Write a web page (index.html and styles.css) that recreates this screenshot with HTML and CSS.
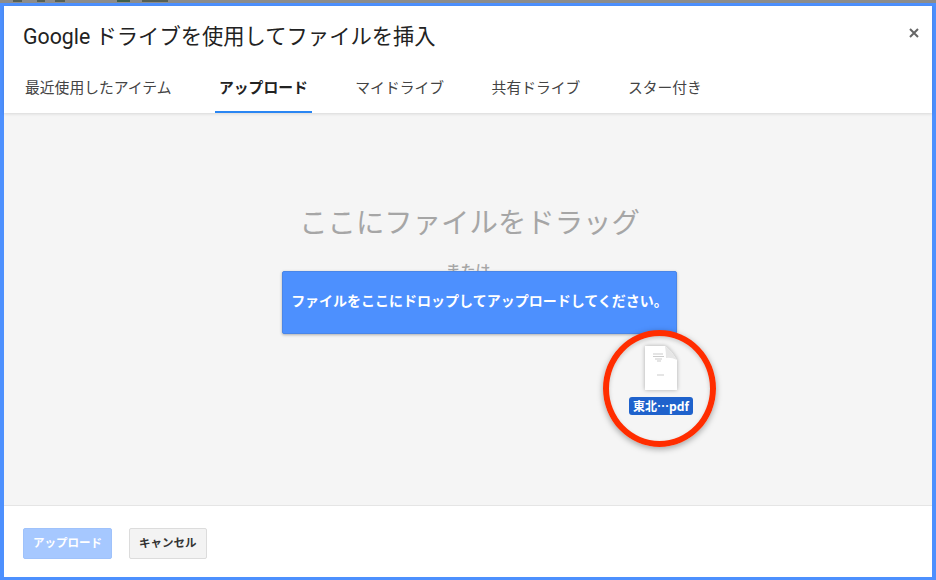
FILE: index.html
```html
<!DOCTYPE html>
<html lang="ja">
<head>
<meta charset="utf-8">
<title>Google ドライブ</title>
<link rel="stylesheet" href="styles.css">
</head>
<body>
<div class="strip"></div>
<div class="dialog">
  <header class="head">
    <div class="title-row">
      <h1 class="title">Google ドライブを使用してファイルを挿入</h1>
      <svg class="close" width="10" height="10" viewBox="0 0 10 10"><path d="M1 1L9 9M9 1L1 9" stroke="#666" stroke-width="2" fill="none"/></svg>
    </div>
    <nav class="tabs">
      <span class="tab">最近使用したアイテム</span>
      <span class="tab active">アップロード</span>
      <span class="tab">マイドライブ</span>
      <span class="tab">共有ドライブ</span>
      <span class="tab">スター付き</span>
    </nav>
  </header>
  <main class="drop">
    <div class="drag">ここにファイルをドラッグ</div>
    <div class="or">または</div>
    <div class="select"></div>
    <div class="toast">ファイルをここにドロップしてアップロードしてください。</div>
    <div class="ring">
      <div class="ghost">
        <svg class="page" width="32" height="44" viewBox="0 0 32 44">
          <path d="M0 0H20Q26 4 32 14V44H0Z" fill="#fff"/>
          <path d="M20 0Q26 4 32 14Q26 11 21 12Q21 6 20 0Z" fill="#e6e6e6"/>
          <path d="M8 8H18M8 10.500H19M10 13H17M12 15H16M12 29H19" stroke="#aaa" stroke-width="0.6"/>
        </svg>
        <span class="fname">東北…pdf</span>
      </div>
    </div>
  </main>
  <footer class="foot">
    <button class="btn primary">アップロード</button>
    <button class="btn">キャンセル</button>
  </footer>
</div>
</body>
</html>
```
FILE: styles.css
```css
* { box-sizing: border-box; }
html, body { margin: 0; height: 100%; }
body {
  width: 936px;
  height: 580px;
  overflow: hidden;
  display: flex;
  flex-direction: column;
  background: #fff;
  font-family: Roboto, "Noto Sans CJK JP", "Liberation Sans", sans-serif;
}
.strip {
  height: 3px;
  flex: none;
  background:
    linear-gradient(90deg, transparent 13px, #555f55 13px, #555f55 22px, transparent 22px, transparent 37px, #556055 37px, #556055 45px, transparent 45px, transparent 55px, #555f55 55px, #555f55 65px, transparent 65px, transparent 117px, #3f5f4a 117px, #3f5f4a 130px, transparent 130px, transparent 142px, #555f55 142px, #555f55 168px, transparent 168px) no-repeat 0 0 / 100% 2px,
    #8c8c8c;
}
.dialog {
  flex: 1;
  display: flex;
  flex-direction: column;
  border: solid #4d90fe;
  border-width: 3px 4px 3px 4px;
  min-height: 0;
}
.head {
  height: 107px;
  flex: none;
  position: relative;
  z-index: 1;
  box-shadow: 0 1px 3px rgba(0,0,0,.12);
  background: #fff;
  display: flex;
  flex-direction: column;
}
.title-row { display: flex; justify-content: space-between; padding: 17px 13px 0 19px; height: 59px; }
.title { margin: 0; font-size: 21.3px; line-height: 28px; font-weight: 400; color: #222; white-space: nowrap; }
.close { margin-top: 5px; margin-right: 0; }
.tabs { display: flex; gap: 39.5px; padding-left: 17px; flex: 1; }
.tab {
  padding: 0 4px;
  font-size: 14.8px;
  line-height: 47px;
  height: 48px;
  color: #444;
  white-space: nowrap;
}
.tab.active { color: #222; font-weight: 700; border-bottom: 2px solid #2a86f3; }
.drop {
  flex: 1;
  position: relative;
  background: #f5f5f5;
  display: flex;
  flex-direction: column;
  align-items: center;
  padding-top: 90px;
}
.drag { font-size: 28.4px; line-height: 38px; margin-top: 2px; color: #a6a6a6; margin-left: 3px; }
.or { font-size: 15px; line-height: 20px; color: #a6a6a6; margin-top: 18px; font-weight: 500; }
.select {
  width: 159px;
  height: 47px;
  margin-top: 0;
  margin-left: 4px;
  background: #a4bdf5;
  border: 1px solid #8da9ec;
  border-radius: 2px;
}
.toast {
  position: absolute;
  left: 278px;
  top: 158px;
  width: 395px;
  height: 63px;
  background: #4d90fe;
  border: 1px solid #4a86e8;
  border-radius: 2px;
  box-shadow: 0 1px 3px rgba(0,0,0,.3);
  color: #fff;
  font-size: 14px;
  font-weight: 700;
  line-height: 59px;
  text-align: center;
  white-space: nowrap;
}
.ring {
  position: absolute;
  left: 599px;
  top: 217px;
  width: 113px;
  height: 117px;
  border: 6px solid #ff2d00;
  border-radius: 50%;
  box-shadow: 0 2px 6px rgba(0,0,0,.35), inset 0 2px 4px rgba(0,0,0,.18);
  display: flex;
  justify-content: center;
  padding-top: 10px;
}
.ghost { display: flex; flex-direction: column; align-items: center; gap: 7px; margin-left: 2px; }
.page { filter: drop-shadow(0 0 2px rgba(0,0,0,.3)); display: block; margin-left: 2px; }
.fname {
  background: #1f62cc;
  color: #fff;
  font-family: "Noto Sans CJK JP", sans-serif;
  font-size: 12px;
  font-weight: 700;
  line-height: 18px;
  padding: 0 4px;
  margin-left: 1px;
  border-radius: 3px;
  white-space: nowrap;
}
.foot {
  height: 72px;
  flex: none;
  background: #fff;
  border-top: 1px solid #e5e5e5;
  display: flex;
  align-items: flex-start;
  gap: 17px;
  padding: 22px 0 0 19px;
}
.btn {
  height: 31px;
  padding: 0 9px;
  font: 700 11.5px/29px Roboto, "Noto Sans CJK JP", sans-serif;
  color: #333;
  background: #f3f3f3;
  border: 1px solid #dcdcdc;
  border-radius: 2px;
}
.btn.primary { background: #a6c8ff; border-color: #9fc2fb; color: #fff; }
```
